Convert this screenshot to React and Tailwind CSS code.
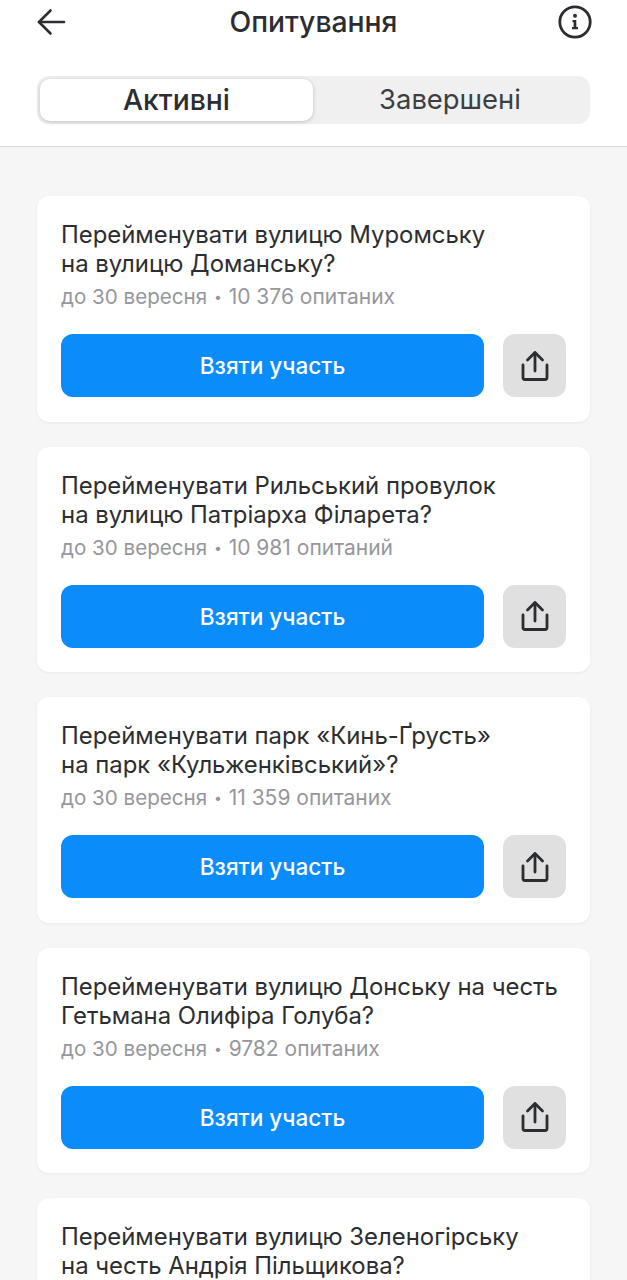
import React from 'react';

const polls = [
  { title: ['Перейменувати вулицю Муромську', 'на вулицю Доманську?'], meta: '10 376 опитаних' },
  { title: ['Перейменувати Рильський провулок', 'на вулицю Патріарха Філарета?'], meta: '10 981 опитаний' },
  { title: ['Перейменувати парк «Кинь-Ґрусть»', 'на парк «Кульженківський»?'], meta: '11 359 опитаних' },
  { title: ['Перейменувати вулицю Донську на честь', 'Гетьмана Олифіра Голуба?'], meta: '9782 опитаних' },
  { title: ['Перейменувати вулицю Зеленогірську', 'на честь Андрія Пільщикова?'], meta: '10 120 опитаних' },
];

const BackIcon = () => (
  <svg width="30" height="28" viewBox="0 0 30 28" fill="none" stroke="#2b2d31" strokeWidth="2.6" strokeLinecap="round" strokeLinejoin="round">
    <path d="M2 14h25" />
    <path d="M13.5 2.5 2 14l11.5 11.5" />
  </svg>
);

const InfoIcon = () => (
  <svg width="34" height="34" viewBox="0 0 34 34" fill="none">
    <circle cx="17" cy="17" r="15.200" stroke="#2b2d31" strokeWidth="2.8" />
    <circle cx="17" cy="10.800" r="2" fill="#2b2d31" />
    <path d="M14.5 15h3.800v7h1.700v2.200h-6v-2.200h1.600v-4.800h-1.100z" fill="#2b2d31" />
  </svg>
);

const ShareIcon = () => (
  <svg width="30" height="32" viewBox="0 0 30 32" fill="none" stroke="#2b2d31" strokeWidth="2.8" strokeLinecap="round" strokeLinejoin="round">
    <path d="M15 21V3" />
    <path d="M7.500 10 15 2.500 22.500 10" />
    <path d="M3 15v12.500a2 2 0 0 0 2 2h20a2 2 0 0 0 2-2V15" />
  </svg>
);

const PollCard = ({ poll }) => (
  <div className="shrink-0 bg-white rounded-xl shadow-[0_1px_3px_rgba(0,0,0,0.06)] px-6 pt-[24px] pb-[24.5px]">
    <h3 className="text-[23.9px] leading-[29px] text-[#2b2d31] whitespace-nowrap">
      {poll.title[0]}
      <br />
      {poll.title[1]}
    </h3>
    <p className="mt-[5px] text-[20.6px] leading-[28px] text-[#95979b] whitespace-nowrap">
      до 30 вересня <span className="text-[14px] align-[2px] mx-[1px]">•</span>{' '}
      <span className="text-[21px]">{poll.meta}</span>
    </p>
    <div className="mt-[23px] flex gap-[19px]">
      <button className="flex-1 h-[63px] pt-px rounded-xl bg-[#0a8dfb] text-white text-[22.6px] font-medium">
        Взяти участь
      </button>
      <button className="w-[63px] h-[63px] rounded-xl bg-[#e0e0e0] flex items-center justify-center">
        <ShareIcon />
      </button>
    </div>
  </div>
);

const App = () => {
  return (
    <div className="h-[1280px] overflow-hidden bg-[#f6f6f6] font-['Inter',sans-serif]">
      {/* Header */}
      <div className="bg-white border-b border-[#d8d8d8] h-[147px] px-[37px]">
        <div className="flex items-center justify-between h-[44px]">
          <BackIcon />
          <h1 className="ml-[2px] text-[28.3px] font-medium text-[#2b2d31]">Опитування</h1>
          <div className="mr-[-2px]">
            <InfoIcon />
          </div>
        </div>
        <div className="mt-[32px] h-[48px] flex rounded-xl bg-[#f0f0f0] p-[3px]">
          <div className="w-[273px] rounded-[10px] bg-white shadow-[0_1px_4px_rgba(0,0,0,0.2)] flex items-center justify-center text-[28.3px] font-medium text-[#2b2d31]">
            Активні
          </div>
          <div className="flex-1 flex items-center justify-center text-[27.400px] text-[#3c3e42]">
            Завершені
          </div>
        </div>
      </div>

      {/* Poll list */}
      <div className="px-[37px] pt-[49px] flex flex-col gap-[25px]">
        {polls.map((poll) => (
          <PollCard key={poll.title[0]} poll={poll} />
        ))}
      </div>
    </div>
  );
};

export default App;
